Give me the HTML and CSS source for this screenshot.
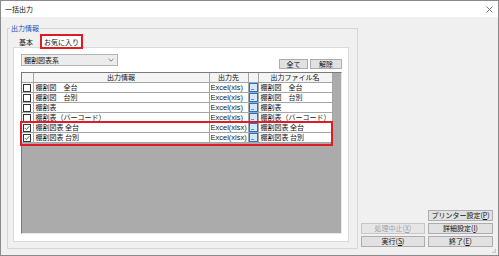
FILE: index.html
```html
<!DOCTYPE html>
<html lang="ja">
  <head>
    <meta charset="UTF-8" />
    <title>一括出力</title>
    <link rel="stylesheet" href="styles.css">
  </head>
  <body>
    <div class="window">
      <div class="titlebar">
        <span class="title">一括出力</span>
        <svg class="close" width="7" height="7" viewBox="0 0 7 7">
          <path d="M0.5 0.5L6.5 6.5M6.5 0.5L0.5 6.5" stroke="#555" stroke-width="0.8" fill="none" />
        </svg>
      </div>

      <div class="client">
        <fieldset class="group">
          <legend>出力情報</legend>
          <div class="tabs">
            <span class="tab">基本</span>
            <span class="tab active">お気に入り<span class="mark tab-mark"></span></span>
          </div>

          <div class="panel">
            <div class="toolbar">
              <div class="combo">
                <span>棚割図表系</span>
                <svg width="6" height="4" viewBox="0 0 6 4">
                  <path d="M0.5 0.8L3 3.2L5.5 0.8" stroke="#666" stroke-width="0.8" fill="none" />
                </svg>
              </div>
              <div class="toolbtns">
                <button class="btn all">全て</button>
                <button class="btn clear">解除</button>
              </div>
            </div>

            <div class="grid">
              <table>
                <colgroup>
                  <col class="c-check" />
                  <col class="c-info" />
                  <col class="c-dest" />
                  <col class="c-icon" />
                  <col class="c-name" />
                </colgroup>
                <thead>
                  <tr>
                    <th></th>
                    <th>出力情報</th>
                    <th>出力先</th>
                    <th></th>
                    <th>出力ファイル名</th>
                  </tr>
                </thead>
                <tbody>
                  <tr>
                    <td><span class="check"></span></td>
                    <td>棚割図　全台</td>
                    <td class="dest">Excel(xls)</td>
                    <td class="icon"><svg class="browse" width="9" height="9" viewBox="0 0 9 9"><rect x="0.5" y="0.5" width="8" height="8" fill="#d6e7fa" stroke="#1f74d8" /><rect x="2" y="6" width="3" height="1" fill="#6f8db3" /></svg></td>
                    <td>棚割図　全台</td>
                  </tr>
                  <tr>
                    <td><span class="check"></span></td>
                    <td>棚割図　台別</td>
                    <td class="dest">Excel(xls)</td>
                    <td class="icon"><svg class="browse" width="9" height="9" viewBox="0 0 9 9"><rect x="0.5" y="0.5" width="8" height="8" fill="#d6e7fa" stroke="#1f74d8" /><rect x="2" y="6" width="3" height="1" fill="#6f8db3" /></svg></td>
                    <td>棚割図　台別</td>
                  </tr>
                  <tr>
                    <td><span class="check"></span></td>
                    <td>棚割表</td>
                    <td class="dest">Excel(xls)</td>
                    <td class="icon"><svg class="browse" width="9" height="9" viewBox="0 0 9 9"><rect x="0.5" y="0.5" width="8" height="8" fill="#d6e7fa" stroke="#1f74d8" /><rect x="2" y="6" width="3" height="1" fill="#6f8db3" /></svg></td>
                    <td>棚割表</td>
                  </tr>
                  <tr>
                    <td><span class="check"></span></td>
                    <td>棚割表（バーコード）</td>
                    <td class="dest">Excel(xls)</td>
                    <td class="icon"><svg class="browse" width="9" height="9" viewBox="0 0 9 9"><rect x="0.5" y="0.5" width="8" height="8" fill="#d6e7fa" stroke="#1f74d8" /><rect x="2" y="6" width="3" height="1" fill="#6f8db3" /></svg></td>
                    <td>棚割表（バーコード）</td>
                  </tr>
                  <tr>
                    <td><span class="check on"></span></td>
                    <td>棚割図表 全台</td>
                    <td class="dest">Excel(xlsx)</td>
                    <td class="icon"><svg class="browse" width="9" height="9" viewBox="0 0 9 9"><rect x="0.5" y="0.5" width="8" height="8" fill="#d6e7fa" stroke="#1f74d8" /><rect x="2" y="6" width="3" height="1" fill="#6f8db3" /></svg></td>
                    <td>棚割図表 全台</td>
                  </tr>
                  <tr>
                    <td><span class="check on"></span></td>
                    <td>棚割図表 台別</td>
                    <td class="dest">Excel(xlsx)</td>
                    <td class="icon"><svg class="browse" width="9" height="9" viewBox="0 0 9 9"><rect x="0.5" y="0.5" width="8" height="8" fill="#d6e7fa" stroke="#1f74d8" /><rect x="2" y="6" width="3" height="1" fill="#6f8db3" /></svg></td>
                    <td>棚割図表 台別</td>
                  </tr>
                </tbody>
              </table>
              <div class="mark row-mark"></div>
            </div>
          </div>
        </fieldset>

        <div class="actions">
          <div class="btngrid">
            <button class="btn printer">プリンター設定(<u>P</u>)</button>
            <button class="btn" disabled>処理中止(<u>X</u>)</button>
            <button class="btn">詳細設定(<u>I</u>)</button>
            <button class="btn">実行(<u>S</u>)</button>
            <button class="btn">終了(<u>E</u>)</button>
          </div>
        </div>
      </div>

      <svg class="grip" width="5" height="5" viewBox="0 0 5 5">
        <rect x="3" y="0" width="1" height="1" fill="#b8b8b8" />
        <rect x="1.5" y="1.5" width="1" height="1" fill="#b8b8b8" />
        <rect x="3" y="1.5" width="1" height="1" fill="#b8b8b8" />
        <rect x="0" y="3" width="1" height="1" fill="#b8b8b8" />
        <rect x="1.5" y="3" width="1" height="1" fill="#b8b8b8" />
        <rect x="3" y="3" width="1" height="1" fill="#b8b8b8" />
      </svg>
    </div>
  </body>
</html>
```

FILE: styles.css
```css
/* whole dialog, drawn at the size of the screenshot */
body {
  margin: 0;
  font-family: "Noto Sans CJK JP", "Noto Sans", sans-serif;
  font-size: 7px;
  color: #111;
}

.window {
  position: relative;
  width: 499px;
  height: 256px;
  box-sizing: border-box;
  border: 1px solid #8a8a8a;
  background: #f0f0f0;
  display: flex;
  flex-direction: column;
}

.titlebar {
  height: 16px;
  background: #fff;
  display: flex;
  align-items: center;
  justify-content: space-between;
  padding: 0 5px 0 4px;
}

.title {
  line-height: 8px;
}

.client {
  flex: 1;
  display: flex;
  padding: 7px 5px 6px 6px;
}

/* group box "出力情報" */
.group {
  margin: 0;
  padding: 0 8px 5px 5px;
  width: 351px;
  min-width: 0;
  box-sizing: border-box;
  border: 1px solid #d5d5d5;
}

.group legend {
  color: #1d4fb5;
  padding: 0 1px;
  margin-left: -3px;
  line-height: 8px;
}

.tabs {
  display: flex;
  align-items: flex-end;
  gap: 2px;
  height: 12px;
  margin-top: 3px;
  padding-left: 1px;
}

.tab {
  padding: 0 5px;
  line-height: 10px;
}

.tab.active {
  position: relative;
  z-index: 1;
  padding: 0 3px;
  line-height: 12px;
  margin-bottom: -1px;
  background: #fff;
  border: 1px solid #d9d9d9;
  border-bottom: none;
}

.mark {
  position: absolute;
  box-sizing: border-box;
  border: 2px solid #e01b24;
}

.tab-mark {
  top: -2px;
  left: -1px;
  right: -1px;
  bottom: -1px;
}

.panel {
  height: 195px;
  box-sizing: border-box;
  background: #fff;
  border: 1px solid #d9d9d9;
  padding: 6px 6px 7px 7px;
}

.toolbar {
  display: flex;
  justify-content: space-between;
  height: 15px;
}

.combo {
  align-self: flex-start;
  width: 97px;
  height: 12px;
  box-sizing: border-box;
  border: 1px solid #b4b4b4;
  background: #ececec;
  display: flex;
  align-items: center;
  justify-content: space-between;
  padding: 0 3px 0 2px;
  line-height: 10px;
}

.toolbtns {
  align-self: flex-end;
  display: flex;
  gap: 2px;
}

.btn {
  margin: 0;
  padding: 0;
  font-family: inherit;
  font-size: 7px;
  line-height: 9px;
  color: #111;
  background: #e1e1e1;
  border: 1px solid #adadad;
}

.btn:disabled {
  color: #a3a3a3;
  background: #e6e6e6;
  border-color: #c6c6c6;
}

.toolbtns .btn {
  height: 10px;
  line-height: 8px;
}

.btn.all {
  width: 29px;
}

.btn.clear {
  width: 32px;
}

/* list of output items */
.grid {
  position: relative;
  margin-top: 3px;
  height: 162px;
  box-sizing: border-box;
  border: 1px solid;
  border-color: #7a7a7a #e8e8e8 #e8e8e8 #7a7a7a;
  background: #ababab;
}

.grid table {
  border-collapse: collapse;
  table-layout: fixed;
  width: 310px;
}

.c-check { width: 11px; }
.c-info { width: 176px; }
.c-dest { width: 39px; }
.c-icon { width: 10px; }
.c-name { width: 74px; }

.grid th,
.grid td {
  height: 9px;
  padding: 0;
  border: 1px solid #a5a5a5;
  line-height: 9px;
  white-space: nowrap;
  overflow: hidden;
}

.grid tr:first-child th,
.grid tr:first-child td {
  border-top: none;
}

.grid th:first-child,
.grid td:first-child {
  border-left: none;
}

.grid th {
  font-weight: normal;
  background: #f4f4f4;
  text-align: center;
}

.grid td {
  background: #fff;
  padding-left: 2px;
}

.grid td:first-child {
  padding-left: 1px;
}

.grid td.dest {
  padding-left: 1px;
  font-family: "Liberation Sans", sans-serif;
  font-size: 7.5px;
  letter-spacing: 0;
  color: #222;
}

.grid td.icon {
  padding-left: 0;
}

.check {
  display: block;
  width: 8px;
  height: 8px;
  box-sizing: border-box;
  border: 1px solid #333;
  background: #fff;
}

.check.on {
  background: #fff url("data:image/svg+xml;utf8,<svg xmlns='http://www.w3.org/2000/svg' width='6' height='6' viewBox='0 0 6 6'><path d='M0.8 3L2.4 4.6L5.3 1.2' stroke='%23555' stroke-width='0.9' fill='none'/></svg>") no-repeat center;
}

.browse {
  display: block;
}

.row-mark {
  top: 48px;
  left: -2px;
  width: 313px;
  height: 25px;
}

/* command buttons, bottom right */
.actions {
  flex: 1;
  display: flex;
  justify-content: flex-end;
  align-items: flex-end;
  padding-bottom: 2px;
}

.btngrid {
  display: grid;
  grid-template-columns: 64px 65px;
  grid-auto-rows: 11px;
  gap: 2px 3px;
}

.btngrid .btn {
  line-height: 9px;
}

.btn.printer {
  grid-column: 2;
}

.grip {
  position: absolute;
  right: 1px;
  bottom: 1px;
}
```
